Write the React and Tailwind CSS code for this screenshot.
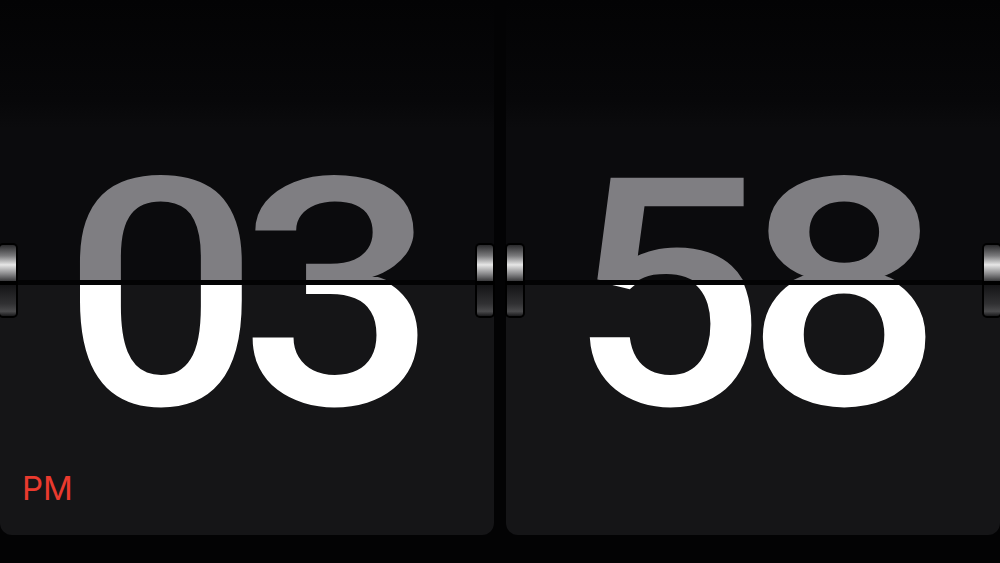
export default function App() {
    const digitFont = { fontFamily: 'Roboto, "Liberation Sans", sans-serif' };
    const labelFont = { fontFamily: 'Inter, "Noto Sans", sans-serif' };

    const Hinge = ({ className }) => (
        <div className={`absolute top-[243px] w-[20px] h-[75px] rounded-[5px] bg-black p-[2px] flex flex-col ${className}`}>
            <div className="h-[36px] rounded-t-[3px] bg-[linear-gradient(180deg,#2a2a2c_0%,#7a7a7c_30%,#e6e6e6_55%,#8a8a8c_80%,#3a3a3c_100%)]" />
            <div className="h-[4px] bg-black" />
            <div className="flex-1 rounded-b-[3px] bg-[linear-gradient(180deg,#141416_0%,#303032_60%,#4a4a4c_85%,#1a1a1c_100%)]" />
        </div>
    );

    const Card = ({ digits, pm }) => (
        <div className="w-[494px] shrink-0 flex flex-col">
            {/* top flap, folded back */}
            <div className="relative h-[280px] overflow-hidden bg-[linear-gradient(180deg,#030304_0px,#070709_100px,#0b0b0d_128px,#0b0b0d_280px)]">
                <div className="absolute inset-0 origin-bottom scale-y-[.82]">
                    <div
                        className="absolute left-0 right-0 top-[110px] pr-[15px] text-center leading-none text-[347px] font-medium tracking-[-20px] text-[#7f7e82]"
                        style={digitFont}
                    >
                        {digits}
                    </div>
                </div>
            </div>
            <div className="h-[5px]" />
            {/* bottom half */}
            <div className="relative h-[250px] overflow-hidden rounded-b-[12px] bg-[#151517]">
                <div
                    className="absolute left-0 right-0 top-[-173px] pr-[15px] text-center leading-none text-[347px] font-medium tracking-[-20px] text-white"
                    style={digitFont}
                >
                    {digits}
                </div>
                {pm && (
                    <div
                        className="absolute left-[22px] top-[187px] leading-none text-[33px] text-[#ea3a2e]"
                        style={labelFont}
                    >
                        PM
                    </div>
                )}
            </div>
        </div>
    );

    return (
        <div className="relative w-full h-[563px] overflow-hidden bg-[#030304]">
            <div className="flex gap-3">
                <Card digits="03" pm />
                <Card digits="58" />
            </div>
            <Hinge className="left-[-2px]" />
            <Hinge className="left-[475px]" />
            <Hinge className="left-[505px]" />
            <Hinge className="left-[982px]" />
        </div>
    );
}
